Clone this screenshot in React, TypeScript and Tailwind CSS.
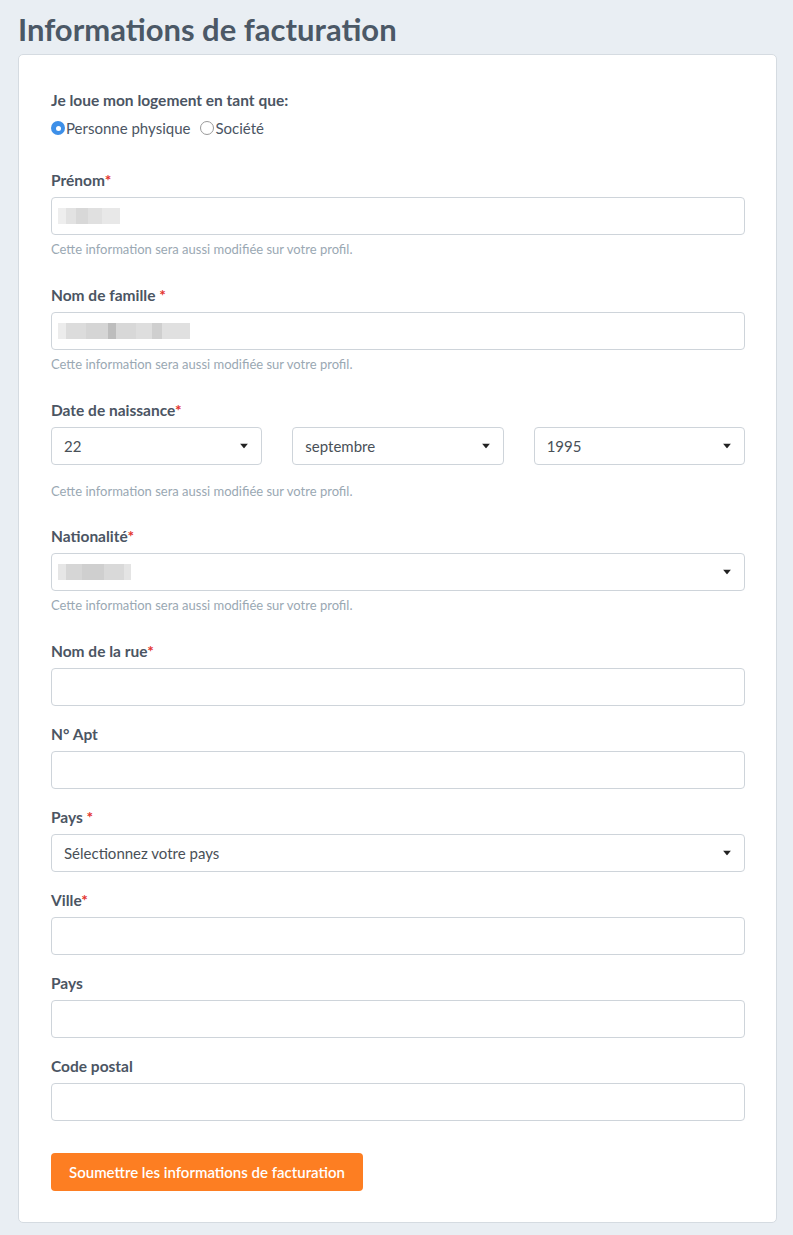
import React from "react";

const font = { fontFamily: "Lato, 'Noto Sans', sans-serif" };

function Caret() {
  return (
    <svg width="8" height="5" viewBox="0 0 8 5" className="absolute right-[13px] top-1/2 -translate-y-1/2">
      <path d="M0 0 L8 0 L4 5 Z" fill="#222" />
    </svg>
  );
}

function Blur({ widths }: { widths: { w: number; c: string }[] }) {
  return (
    <div className="-ml-[6px] flex h-[16px] items-stretch">
      {widths.map((b, i) => (
        <div key={i} style={{ width: b.w, backgroundColor: b.c }} />
      ))}
    </div>
  );
}

function Label({ text, star, space }: { text: string; star?: boolean; space?: boolean }) {
  return (
    <div className="h-[20px] text-[15.5px] leading-[20px] font-bold text-[#4b5563]">
      {text}
      {star && <span className="text-[#e3342f]">{space ? " *" : "*"}</span>}
    </div>
  );
}

function Help({ top = "mt-[6px]" }: { top?: string }) {
  return (
    <div className={`${top} h-[16px] text-[13px] leading-[16px] text-[#9aa8b3]`}>
      Cette information sera aussi modifiée sur votre profil.
    </div>
  );
}

function Input({ children, select }: { children?: React.ReactNode; select?: boolean }) {
  return (
    <div className="relative mt-[7px] flex h-[38px] items-center rounded-[4px] border border-[#ced4da] bg-white px-[12px] text-[15px] text-[#495057]">
      {children}
      {select && <Caret />}
    </div>
  );
}

function Select({ value }: { value: string }) {
  return (
    <div className="relative flex h-[38px] items-center rounded-[4px] border border-[#ced4da] bg-white px-[12px] text-[15px] text-[#495057]">
      {value}
      <Caret />
    </div>
  );
}

export default function App() {
  return (
    <div style={font} className="min-h-[1235px] bg-[#e9eef3] pl-[18px] pr-[16px] pt-[11px] pb-[12px]">
      <h1 className="h-[36px] text-[31px] leading-[36px] font-bold text-[#4b5866]">
        Informations de facturation
      </h1>
      <div className="mt-[7px] rounded-[5px] border border-[#d5dbe1] bg-white pl-[32px] pr-[31px] pt-[35px] pb-[31px]">
        <div className="h-[20px] text-[15.5px] leading-[20px] font-bold text-[#4b5563]">
          Je loue mon logement en tant que:
        </div>
        <div className="mt-[8px] flex h-[20px] items-center text-[15px] text-[#4b5563]">
          <span className="flex h-[14px] w-[14px] items-center justify-center rounded-full bg-[#3d8fe8]">
            <span className="h-[5px] w-[5px] rounded-full bg-white" />
          </span>
          <span className="ml-[1px]">Personne physique</span>
          <span className="ml-[10px] h-[14px] w-[14px] rounded-full border border-[#9a9a9a] bg-white" />
          <span className="ml-[1px]">Société</span>
        </div>

        <div className="mt-[32px]">
          <Label text="Prénom" star />
          <Input>
            <Blur widths={[{ w: 8, c: "#eeeeee" }, { w: 10, c: "#e2e2e2" }, { w: 12, c: "#d8d8d8" }, { w: 14, c: "#e0e0e0" }, { w: 18, c: "#e8e8e8" }]} />
          </Input>
          <Help />
        </div>

        <div className="mt-[28px]">
          <Label text="Nom de famille" star space />
          <Input>
            <Blur widths={[{ w: 8, c: "#ececec" }, { w: 20, c: "#dcdcdc" }, { w: 22, c: "#d5d5d5" }, { w: 8, c: "#bdbdbd" }, { w: 20, c: "#d8d8d8" }, { w: 16, c: "#dedede" }, { w: 10, c: "#cfcfcf" }, { w: 28, c: "#e0e0e0" }]} />
          </Input>
          <Help />
        </div>

        <div className="mt-[28px]">
          <Label text="Date de naissance" star />
          <div className="mt-[7px] grid grid-cols-3 gap-[30px]">
            <Select value="22" />
            <Select value="septembre" />
            <Select value="1995" />
          </div>
          <Help top="mt-[18px]" />
        </div>

        <div className="mt-[27px]">
          <Label text="Nationalité" star />
          <Input select>
            <Blur widths={[{ w: 8, c: "#e6e6e6" }, { w: 16, c: "#d6d6d6" }, { w: 22, c: "#cfcfcf" }, { w: 20, c: "#d9d9d9" }, { w: 7, c: "#e4e4e4" }]} />
          </Input>
          <Help />
        </div>

        <div className="mt-[28px]">
          <Label text="Nom de la rue" star />
          <Input />
        </div>
        <div className="mt-[18px]">
          <Label text="N° Apt" />
          <Input />
        </div>
        <div className="mt-[18px]">
          <Label text="Pays" star space />
          <Input select>Sélectionnez votre pays</Input>
        </div>
        <div className="mt-[18px]">
          <Label text="Ville" star />
          <Input />
        </div>
        <div className="mt-[18px]">
          <Label text="Pays" />
          <Input />
        </div>
        <div className="mt-[18px]">
          <Label text="Code postal" />
          <Input />
        </div>

        <button className="mt-[32px] h-[38px] rounded-[4px] bg-[#fd7e22] px-[18px] text-[15px] font-semibold text-white">
          Soumettre les informations de facturation
        </button>
      </div>
    </div>
  );
}
